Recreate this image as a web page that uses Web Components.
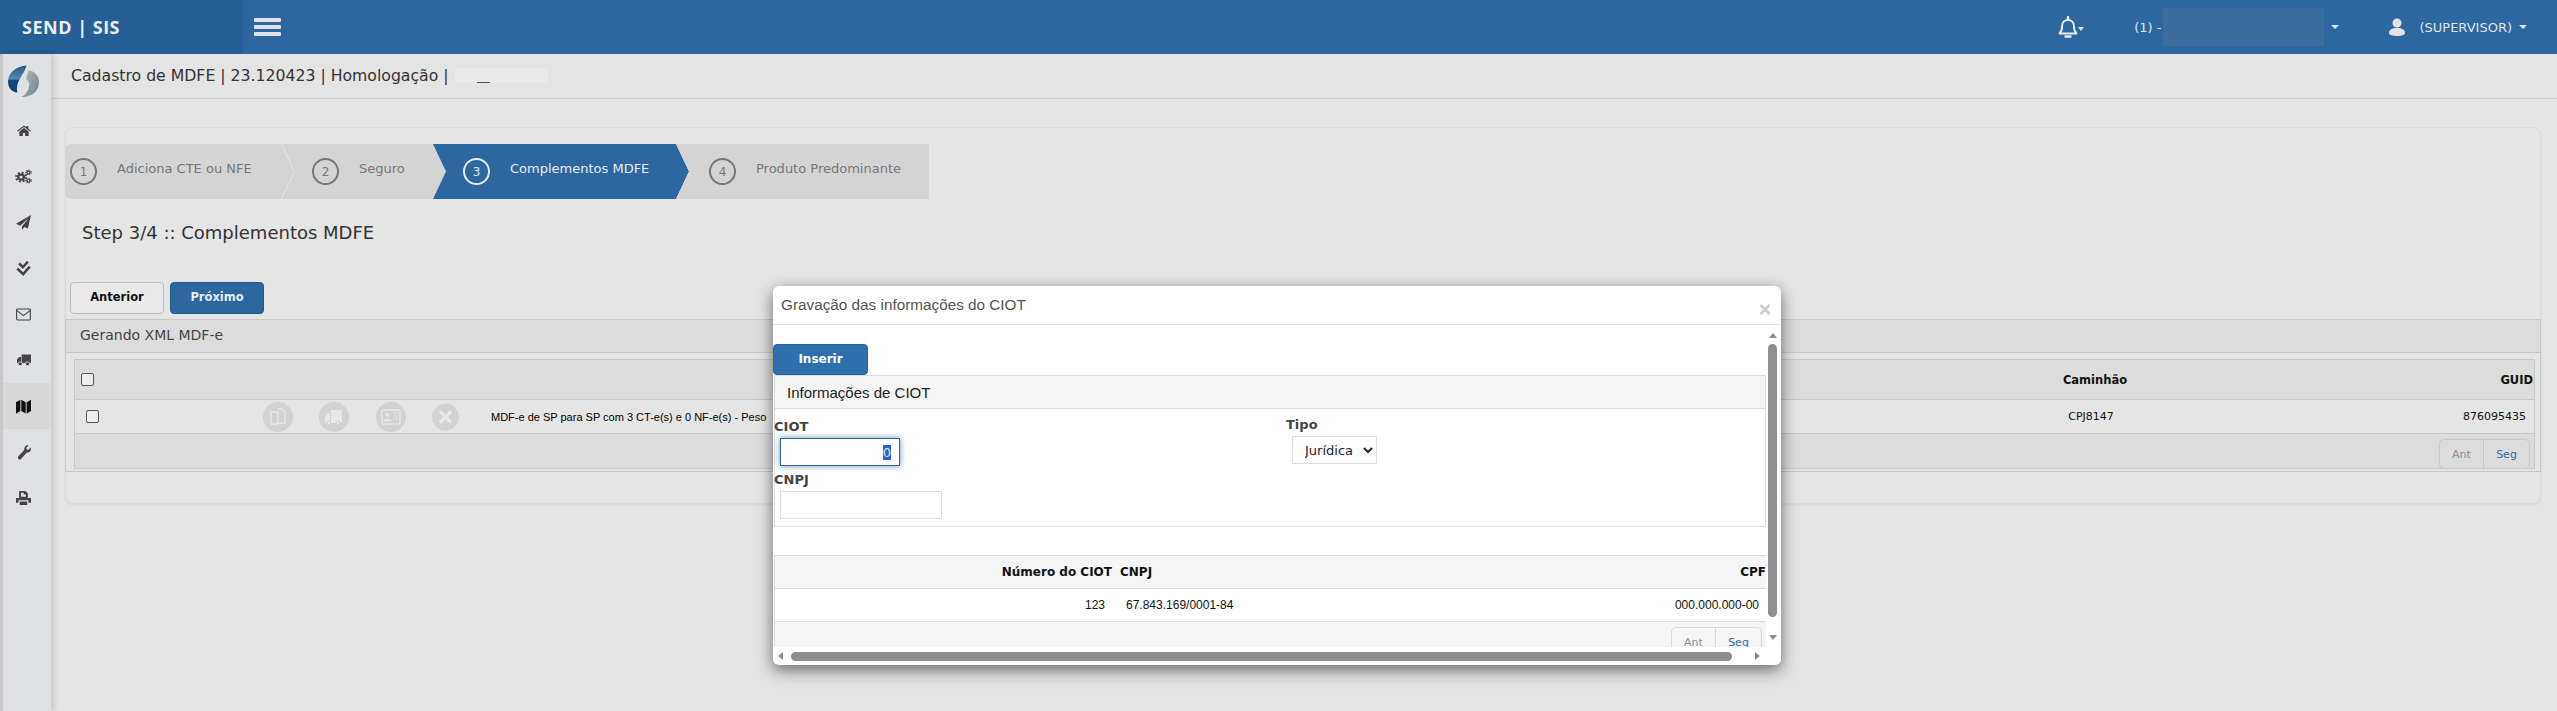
<!DOCTYPE html>
<html lang="pt-BR">
<head>
<meta charset="utf-8">
<title>Cadastro de MDFE</title>
<style>
  html, body { margin: 0; height: 100%; }
  body {
    background: #e4e4e4;
    font-family: "DejaVu Sans", sans-serif;
    overflow: hidden;
  }
  .shell { display: flex; height: 657px; }
</style>
</head>
<body>
<send-topbar></send-topbar>
<div class="shell">
  <send-sidebar></send-sidebar>
  <send-content></send-content>
</div>
<ciot-modal></ciot-modal>

<script>
// Small helper, every element just stamps its template in an open shadow root
class Base extends HTMLElement {
    constructor(html) {
        super();
        this.attachShadow({ mode: 'open' });
        const template = document.createElement('template');
        template.innerHTML = html;
        this.shadowRoot.appendChild(template.content.cloneNode(true));
    }
}

class SendTopbar extends Base {
    constructor() {
        super(`
      <style>
        :host { display: flex; height: 54px; background: #2c679f; color: #dfe8f1; align-items: center; }
        .brand {
          width: 243px; height: 54px; box-sizing: border-box; padding-left: 22px; background: #255f95;
          display: flex; align-items: center;
          font: 700 18px/1 "Open Sans", sans-serif; color: #e8eef4; letter-spacing: .5px; white-space: pre;
        }
        .burger { margin-left: 11px; display: flex; flex-direction: column; gap: 3px; width: 27px; }
        .burger i { display: block; height: 4px; border-radius: 1px; background: #dfe3e8; }
        .right { margin-left: auto; display: flex; align-items: center; font: 13px "DejaVu Sans", sans-serif; padding-right: 30px; }
        .caret { width: 0; height: 0; border: 4px solid transparent; border-top-color: #dfe8f1; border-bottom: 0; display: inline-block; }
        .bell { display: flex; align-items: center; }
        .blur { width: 161px; height: 38px; margin-left: 2px; background: #3a6d9e; }
        .unit { margin-left: 50px; display: flex; align-items: center; }
        .unit .caret { margin-left: 7px; }
        .user { margin-left: 50px; display: flex; align-items: center; }
        .user span { margin-left: 14px; }
        .user .caret { margin-left: 7px; }
      </style>
      <div class="brand">SEND | SIS</div>
      <div class="burger"><i></i><i></i><i></i></div>
      <div class="right">
        <div class="bell">
          <svg width="20" height="23" viewBox="0 0 20 23" fill="none" stroke="#e6ebf0" stroke-width="2">
            <path d="M1.500 17.500c2-2 2.600-4 2.600-7.500 0-3.500 2.400-6 5.900-6s5.900 2.500 5.900 6c0 3.500.6 5.500 2.600 7.500z" stroke-linejoin="round"/>
            <path d="M10 1v3M7.500 20.500h5" stroke-linecap="round" stroke-width="2.400"/>
          </svg>
          <span class="caret" style="margin-top:4px;border-width:4px 3.500px 0"></span>
        </div>
        <div class="unit"><span>(1) -</span><div class="blur"></div><span class="caret"></span></div>
        <div class="user">
          <svg width="16" height="18" viewBox="0 0 16 18" fill="#dfe3e8"><circle cx="8" cy="5" r="4.500"/><path d="M0 15c0-3.500 3-5 8-5s8 1.500 8 5c0 2-3 3-8 3s-8-1-8-3z"/></svg>
          <span>(SUPERVISOR)</span><i class="caret"></i>
        </div>
      </div>
    `);
    }
}

const sideIcons = {
    home: [14, 12, '<path d="M12 3 0 13.500l1.500 1.700L12 6l10.500 9.200 1.500-1.700-4.500-4V4h-3.500v2.500zM4 15v9h6v-6h4v6h6v-9l-8-7z"/>'],
    cogs: [17, 15, '<g fill="none" stroke="#444"><circle cx="8.500" cy="13" r="4" stroke-width="3.400"/><circle cx="8.500" cy="13" r="7" stroke-width="3" stroke-dasharray="2.800 2.700"/><circle cx="19" cy="5.500" r="2.200" stroke-width="1.800"/><circle cx="19" cy="5.500" r="3.800" stroke-width="1.800" stroke-dasharray="1.800 1.700"/><circle cx="19" cy="18.500" r="2.200" stroke-width="1.800"/><circle cx="19" cy="18.500" r="3.800" stroke-width="1.800" stroke-dasharray="1.800 1.700"/></g>'],
    plane: [15, 15, '<path d="M24 0 0 14l6.500 3L20 5 9.500 18.500V24l4-5 5.500 2.500z"/>'],
    check: [15, 15, '<g fill="none" stroke="#444" stroke-width="4"><path d="m5 4 6 6L19 1"/><path d="m2 12 9.500 9L22 9"/></g>'],
    mail: [15, 13, '<g fill="none" stroke="#444" stroke-width="1.800"><rect x="1" y="2" width="22" height="20" rx="1.500"/><path d="m1.500 5 10.500 9 10.500-9"/></g>'],
    truck: [14, 12, '<path d="M8 1h16v17H8zM7 6H3.500L0 11v7h7z"/><circle cx="5.500" cy="19.500" r="3.800" stroke="#e0e2e5" stroke-width="1.500"/><circle cx="18" cy="19.500" r="3.800" stroke="#e0e2e5" stroke-width="1.500"/>'],
    map: [15, 15, '<path d="M0 5 7 1v18l-7 4.500zM8.500 1l7 4v18l-7-4zM17 5l7-4v18l-7 4.500z"/>'],
    wrench: [14, 15, '<path d="M24 6c0 4-3.500 7-7 6L6 23c-2 1.500-6-2.500-4-4.500L12.500 8C11.500 4 15 0 19 0l1 .2L16 4.500l.8 2.700 2.500.8L23.500 4z"/>'],
    print: [15, 14, '<path d="M5 0h10l4 4v8H5zM8 3v7h8V6h-3.500V3z" fill-rule="evenodd"/><path d="M0 12h24v8h-4v-4H4v4H0z"/><path d="M6 18h12v6H6z"/>']
};

class SendSidebar extends Base {
    constructor() {
        super(`
      <style>
        :host {
          display: block; width: 48px; flex: none; border-left: 3px solid #c8c8c8; background: #dfe1e4;
          box-shadow: 3px 0 6px rgba(0,0,0,.12); position: relative; z-index: 1;
        }
        .logo { height: 53px; box-sizing: border-box; padding: 11px 0 0 5px; }
        .logo svg { display: block; }
        nav a { display: flex; height: 46px; box-sizing: border-box; padding-right: 7px; align-items: center; justify-content: center; }
        nav a.on { background: #d8d8d8; }
        nav svg { fill: #444; }
        nav a.on svg { fill: #111; }
      </style>
      <div class="logo">
        <svg width="31" height="32" viewBox="0 0 30 32" preserveAspectRatio="none">
          <defs>
            <linearGradient id="b" x1="0" y1="0" x2="0" y2="1"><stop offset="0" stop-color="#1e5a8e"/><stop offset=".5" stop-color="#5d87a9"/><stop offset=".55" stop-color="#0f4a7c"/><stop offset="1" stop-color="#0c3f6c"/></linearGradient>
            <linearGradient id="g" x1="0" y1="0" x2="1" y2="1"><stop offset="0" stop-color="#b4c0c6"/><stop offset="1" stop-color="#6d8088"/></linearGradient>
          </defs>
          <path d="M18 .5C8 1 0 7.500 0 17c0 6 4 10 9 10.500C8 22 9 18 12 13 14 9 17 5 18 .5z" fill="url(#b)"/>
          <path d="M20 5c6 1.500 10 6 10 12 0 9-7 15-17 15 4-2 7-7 7.500-12 .4-3-1.500-5-3-6 .5-3 1.500-6 2.500-9z" fill="url(#g)"/>
        </svg>
      </div>
      <nav></nav>
    `);
        const nav = this.shadowRoot.querySelector('nav');
        Object.keys(sideIcons).forEach((name) => {
            const [w, h, body] = sideIcons[name];
            const a = document.createElement('a');
            if (name === 'map') a.className = 'on';
            a.innerHTML = `<svg width="${w}" height="${h}" viewBox="0 0 24 24" preserveAspectRatio="none">${body}</svg>`;
            nav.appendChild(a);
        });
    }
}

class SendContent extends Base {
    constructor() {
        super(`
      <style>
        :host { display: block; flex: 1; min-width: 0; }
        .crumb {
          height: 45px; box-sizing: border-box; border-bottom: 1px solid #cbcbcb; display: flex; align-items: center;
          padding: 0 0 2px 20px; font-size: 15.700px; color: #333; white-space: pre;
        }
        .mask { width: 93px; height: 15px; margin-left: 6px; background: #eaeaea; position: relative; }
        .mask::after { content: ""; position: absolute; left: 22px; bottom: 0; width: 13px; height: 1px; background: #555; }
        .card {
          margin: 28px 16px 0 14px; height: 377px; box-sizing: border-box; border: 1px solid #dadada; border-radius: 8px;
          background: #e5e5e5; box-shadow: 0 1px 2px rgba(0,0,0,.06); padding-top: 16px;
        }
        h1 { margin: 23px 0 0 16px; font: 400 18px/22px "DejaVu Sans", sans-serif; color: #333; }
        .buttons { display: flex; gap: 6px; margin: 38px 0 0 4px; }
      </style>
      <div class="crumb">Cadastro de MDFE | 23.120423 | Homologação |<span class="mask"></span></div>
      <div class="card">
        <send-stepper></send-stepper>
        <h1>Step 3/4 :: Complementos MDFE</h1>
        <div class="buttons">
          <send-button>Anterior</send-button>
          <send-button primary>Próximo</send-button>
        </div>
        <mdfe-panel></mdfe-panel>
      </div>
    `);
    }
}

class SendStepper extends Base {
    constructor() {
        super(`
      <style>
        :host { display: flex; width: 876px; height: 55px; margin-left: -1px; border-radius: 6px 8px 8px 6px; overflow: hidden; }
        .step {
          display: flex; flex: none; height: 55px; box-sizing: border-box; background: #d4d4d4; color: #777; font-size: 13px;
          clip-path: polygon(0 0, calc(100% - 13px) 0, 100% 50%, calc(100% - 13px) 100%, 0 100%, 13px 50%);
          margin-left: -12px; align-items: center; white-space: nowrap;
        }
        .step:first-child { margin-left: 0; clip-path: polygon(0 0, calc(100% - 13px) 0, 100% 50%, calc(100% - 13px) 100%, 0 100%); }
        .step:last-child { clip-path: polygon(0 0, 100% 0, 100% 100%, 0 100%, 13px 50%); }
        .on { background: #2c679f; color: #e6edf4; }
        b { font-weight: 400; width: 23px; height: 23px; border: 2px solid #777; border-radius: 50%; display: flex; align-items: center; justify-content: center; font-size: 12px; flex: none; margin-right: 20px; }
        .on b { border-color: #e6edf4; }
        span { margin-bottom: 7px; }
      </style>
      <div class="step" style="width:241px;padding-left:17px"><b>1</b><span>Adiciona CTE ou NFE</span></div>
      <div class="step" style="width:165px;padding-left:30px"><b>2</b><span>Seguro</span></div>
      <div class="step on" style="width:256px;padding-left:30px;margin-left:-14px"><b>3</b><span>Complementos MDFE</span></div>
      <div class="step" style="width:253px;padding-left:33px;margin-left:-13px"><b>4</b><span>Produto Predominante</span></div>
    `);
    }
}

class SendButton extends Base {
    constructor() {
        super(`
      <style>
        :host {
          display: flex; width: 94px; height: 32px; box-sizing: border-box; align-items: center; justify-content: center; padding-bottom: 3px;
          border: 1px solid #bdbdbd; border-radius: 4px; background: #e9e9e9; color: #111; font-size: 11.500px; font-weight: 700;
        }
        :host([primary]) { background: #2c679f; border-color: #1f5a92; color: #e6edf4; }
      </style>
      <slot></slot>
    `);
    }
}

class SendPager extends Base {
    constructor() {
        super(`
      <style>
        :host { display: flex; height: 30px; box-sizing: border-box; border: 1px solid var(--pager-line, #cfcfcf); border-radius: 5px; font-size: 11px; }
        span { display: flex; align-items: center; justify-content: center; width: 43px; color: #8d8d8d; }
        span + span { border-left: 1px solid var(--pager-line, #cfcfcf); color: #3a6c9c; width: 45px; }
      </style>
      <span>Ant</span><span>Seg</span>
    `);
    }
}

class MdfePanel extends Base {
    constructor() {
        super(`
      <style>
        :host { display: block; margin: 5px -1px 0; height: 153px; box-sizing: border-box; border: 1px solid #c8c8c8; }
        .head { height: 33px; box-sizing: border-box; background: #dcdcdc; border-bottom: 1px solid #c8c8c8; padding: 0 0 3px 14px; display: flex; align-items: center; font-size: 14px; color: #444; }
        .table { margin: 6px 5px 0 8px; border: 1px solid #c8c8c8; font-size: 11.500px; color: #111; }
        .tr { display: grid; grid-template-columns: 188px 228px 1fr 190px 344px; align-items: center; }
        .th { height: 39px; background: #dcdcdc; border-bottom: 1px solid #c8c8c8; font-weight: 700; }
        .td { height: 33px; border-bottom: 1px solid #c8c8c8; font-size: 11px; }
        .foot { height: 34px; background: #dcdcdc; display: flex; justify-content: flex-end; padding: 5px 4px 0 0; box-sizing: border-box; --pager-line: #c8c8c8; }
        .box { width: 13px; height: 13px; box-sizing: border-box; border: 1px solid #555; border-radius: 2px; background: #eee; }
        .th .box { margin-left: 6px; }
        .td .box { margin-left: 11px; }
        .mid { text-align: center; }
        .end { text-align: right; padding-right: 1px; }
        .td .end { padding-right: 8px; }
        .mid.val { margin-left: -8px; }
        .acts { display: flex; gap: 26px; }
        .acts svg { display: block; }
        .desc { white-space: nowrap; font-family: "Liberation Sans", sans-serif; font-size: 11px; color: #000; overflow: hidden; }
      </style>
      <div class="head">Gerando XML MDF-e</div>
      <div class="table">
        <div class="tr th"><div><div class="box"></div></div><div></div><div></div><div class="mid">Caminhão</div><div class="end">GUID</div></div>
        <div class="tr td">
          <div><div class="box"></div></div>
          <div class="acts">
            <svg width="30" height="30" viewBox="0 0 30 30"><circle cx="15" cy="15" r="15" fill="#d2d2d2"/><g fill="none" stroke="#e8e8e8" stroke-width="1.500"><path d="M8 10h7v12H8zM14 7h5l3 3v11h-7"/></g></svg>
            <svg width="30" height="30" viewBox="0 0 30 30"><circle cx="15" cy="15" r="15" fill="#d2d2d2"/><path d="M12 8h11v13H12zM11 11H8l-2 4v6h5z" fill="#e8e8e8"/><circle cx="10" cy="21" r="2" fill="#e8e8e8" stroke="#d2d2d2"/><circle cx="19" cy="21" r="2" fill="#e8e8e8" stroke="#d2d2d2"/></svg>
            <svg width="30" height="30" viewBox="0 0 30 30" style="margin-left:1px"><circle cx="15" cy="15" r="15" fill="#d2d2d2"/><rect x="6" y="8" width="18" height="14" rx="1" fill="none" stroke="#e8e8e8" stroke-width="1.500"/><circle cx="11.500" cy="13" r="2" fill="#e8e8e8"/><path d="M8 19c0-3 7-3 7 0zM17 11h5M17 14h5M17 17h5" fill="#e8e8e8" stroke="#e8e8e8"/></svg>
            <svg width="27" height="30" viewBox="0 0 27 30"><circle cx="13.500" cy="15" r="13.500" fill="#d2d2d2"/><path d="m9 10.500 9 9m0-9-9 9" stroke="#e8e8e8" stroke-width="3.600" stroke-linecap="round"/></svg>
          </div>
          <div class="desc">MDF-e de SP para SP com 3 CT-e(s) e 0 NF-e(s) - Peso</div>
          <div class="mid val">CPJ8147</div>
          <div class="end">876095435</div>
        </div>
        <div class="foot"><send-pager></send-pager></div>
      </div>
    `);
    }
}

class CiotModal extends Base {
    constructor() {
        super(`
      <style>
        :host {
          position: absolute; left: 773px; top: 286px; width: 1008px; height: 379px; display: flex; flex-direction: column;
          background: #fff; border-radius: 6px; box-shadow: 0 5px 16px rgba(0,0,0,.55); overflow: hidden; z-index: 5;
          font-family: "Liberation Sans", sans-serif; color: #111;
        }
        .title { height: 39px; flex: none; box-sizing: border-box; border-bottom: 1px solid #e5e5e5; display: flex; align-items: center; padding: 0 10px 0 8px; font-size: 15.300px; color: #555; }
        .close { margin-left: auto; margin-top: 8px; color: #ccc; }
        .close svg { display: block; }
        .main { flex: 1; display: flex; min-height: 0; }
        .scroll { width: 993px; flex: none; padding-top: 19px; overflow: hidden; }
        .insert { width: 95px; height: 31px; box-sizing: border-box; background: #2e70ad; border: 1px solid #28649c; border-radius: 4px; color: #fff; font: 700 12px "DejaVu Sans", sans-serif; display: flex; align-items: center; justify-content: center; padding-bottom: 2px; }
        .panel { border: 1px solid #ddd; height: 152px; box-sizing: border-box; margin-left: 1px; }
        .phead { height: 33px; box-sizing: border-box; background: #f5f5f5; border-bottom: 1px solid #ddd; display: flex; align-items: center; padding-left: 12px; font-size: 15px; color: #222; }
        .fields { display: grid; grid-template-columns: 512px 1fr; }
        .vbar { flex: 1; display: flex; flex-direction: column; align-items: center; padding: 8px 2px 0 0; }
        .thumb { width: 9px; height: 273px; margin-top: 6px; border-radius: 5px; background: #8e8e8e; }
        .up { width: 0; height: 0; border: 4.500px solid transparent; border-bottom: 5px solid #8e8e8e; border-top: 0; }
        .down { width: 0; height: 0; border: 4.500px solid transparent; border-top: 5px solid #8e8e8e; border-bottom: 0; margin-top: 18px; }
        .data { margin: 28px 0 0 1px; font: 12px "DejaVu Sans", sans-serif; }
        .tr { display: grid; grid-template-columns: 337px 8px 1fr; height: 33px; box-sizing: border-box; align-items: center; border-top: 1px solid #ddd; border-left: 1px solid #ddd; }
        .th { background: #f5f5f5; font-weight: 700; }
        .th div:nth-child(1) { text-align: right; }
        .foot { background: #f5f5f5; height: 40px; border-top: 1px solid #ddd; border-left: 1px solid #ddd; display: flex; justify-content: flex-end; padding: 5px 4px 0 0; box-sizing: border-box; --pager-line: #d8d8d8; }
        .cols { display: flex; justify-content: space-between; grid-column: 3; }
        .val { font-family: "Liberation Sans", sans-serif; font-size: 12px; }
        .tr .n { text-align: right; padding-right: 7px; }
        .tr .c { padding-left: 6px; }
        .tr .p { padding-right: 7px; }
        .hbar { height: 18px; flex: none; display: flex; align-items: center; padding: 0 21px 0 5px; }
        .left { width: 0; height: 0; border: 4.500px solid transparent; border-right: 5px solid #8e8e8e; border-left: 0; }
        .hthumb { width: 941px; height: 9px; margin-left: 8px; border-radius: 5px; background: #8e8e8e; }
        .right { width: 0; height: 0; border: 4.500px solid transparent; border-left: 5px solid #8e8e8e; border-right: 0; margin-left: auto; }
      </style>
      <div class="title">Gravação das informações do CIOT
        <span class="close"><svg width="12" height="11" viewBox="0 0 12 11"><path d="m1.500 1 9 9m0-9-9 9" stroke="#ccc" stroke-width="2.600"/></svg></span>
      </div>
      <div class="main">
        <div class="scroll">
          <div class="insert">Inserir</div>
          <div class="panel">
            <div class="phead">Informações de CIOT</div>
            <div class="fields">
              <div>
                <ciot-field label="CIOT" width="120" focused value="0" style="padding-top:9px"></ciot-field>
                <ciot-field label="CNPJ" width="162"></ciot-field>
              </div>
              <ciot-select label="Tipo"></ciot-select>
            </div>
          </div>
          <div class="data">
            <div class="tr th"><div>Número do CIOT</div><div></div><div class="cols"><span>CNPJ</span><span>CPF</span></div></div>
            <div class="tr val"><div class="n">123</div><div></div><div class="cols"><span class="c">67.843.169/0001-84</span><span class="p">000.000.000-00</span></div></div>
            <div class="foot"><send-pager></send-pager></div>
          </div>
        </div>
        <div class="vbar"><div class="up"></div><div class="thumb"></div><div class="down"></div></div>
      </div>
      <div class="hbar"><div class="left"></div><div class="hthumb"></div><div class="right"></div></div>
    `);
    }
}

class CiotField extends Base {
    constructor() {
        super(`
      <style>
        :host { display: block; padding-top: 5px; }
        label { display: block; margin-left: -1px; font: 700 13px/18px "DejaVu Sans", sans-serif; color: #444; }
        .input { margin: 2px 0 0 5px; height: 28px; box-sizing: border-box; border: 1px solid #ddd; background: #fff; display: flex; align-items: center; justify-content: flex-end; padding-right: 8px; font: 13px "DejaVu Sans", sans-serif; }
        :host([focused]) .input { border-color: #2c679f; box-shadow: 0 0 6px rgba(44,103,159,.7); }
        mark { background: #2f5fd0; color: #cfe3ff; }
      </style>
      <label></label>
      <div class="input"><mark></mark></div>
    `);
        this.shadowRoot.querySelector('label').textContent = this.getAttribute('label');
        this.shadowRoot.querySelector('.input').style.width = this.getAttribute('width') + 'px';
        const mark = this.shadowRoot.querySelector('mark');
        if (this.getAttribute('value')) mark.textContent = this.getAttribute('value');
        else mark.remove();
    }
}

class CiotSelect extends Base {
    constructor() {
        super(`
      <style>
        :host { display: block; padding-top: 7px; }
        label { display: block; margin-left: -1px; font: 700 13px/18px "DejaVu Sans", sans-serif; color: #444; }
        select { display: block; margin: 2px 0 0 5px; width: 85px; height: 28px; box-sizing: border-box; border: 1px solid #ddd; background: #fff; padding-left: 8px; font: 13px "DejaVu Sans", sans-serif; color: #222; border-radius: 0; }
      </style>
      <label></label>
      <select><option>Jurídica</option><option>Física</option></select>
    `);
        this.shadowRoot.querySelector('label').textContent = this.getAttribute('label');
    }
}

customElements.define('send-topbar', SendTopbar);
customElements.define('send-sidebar', SendSidebar);
customElements.define('send-content', SendContent);
customElements.define('send-stepper', SendStepper);
customElements.define('send-button', SendButton);
customElements.define('send-pager', SendPager);
customElements.define('mdfe-panel', MdfePanel);
customElements.define('ciot-field', CiotField);
customElements.define('ciot-select', CiotSelect);
customElements.define('ciot-modal', CiotModal);
</script>
</body>
</html>
